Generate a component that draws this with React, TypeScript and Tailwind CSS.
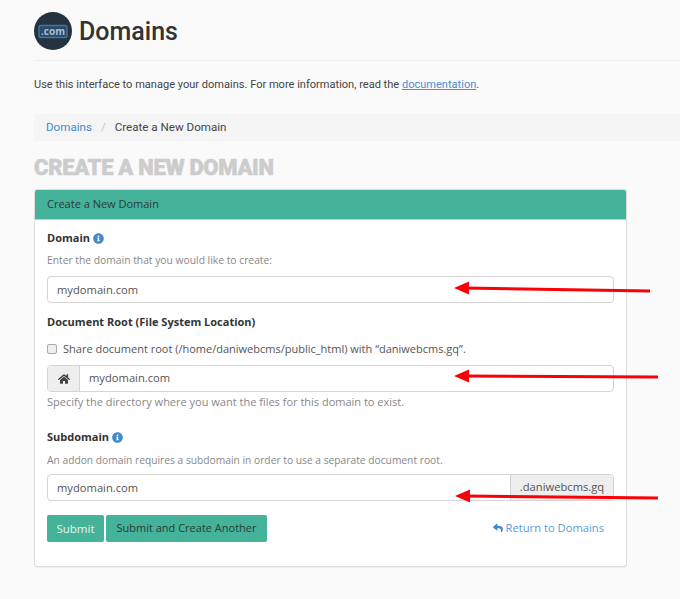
import { FaHome, FaInfoCircle, FaReply } from "react-icons/fa";

function Arrow({ x1, y1, x2, y2 }: { x1: number; y1: number; x2: number; y2: number }) {
  return (
    <g>
      <line x1={x1} y1={y1} x2={x2 + 10} y2={y2} stroke="#fb0007" strokeWidth={3} />
      <polygon points={`${x2},${y2} ${x2 + 15},${y2 - 6.5} ${x2 + 15},${y2 + 6.5}`} fill="#fb0007" />
    </g>
  );
}

export default function App() {
  return (
    <div className="relative h-[599px] w-[680px] overflow-hidden bg-[#fafafa] font-['Open_Sans',sans-serif] text-[#333]">
      <div className="pl-[34px]">
        <div className="flex h-[61px] items-start border-b border-[#eeeeee] pt-3">
          <svg width="38" height="38" viewBox="0 0 38 38">
            <circle cx="19" cy="19" r="19" fill="#24333f" />
            <rect x="5" y="13.5" width="28" height="12" rx="2" fill="#2b4a66" stroke="#3f74a8" strokeWidth="1.4" />
            <text x="19" y="23" textAnchor="middle" fontSize="10" fontWeight="700" fill="#a9bfd2" fontFamily="Open Sans, sans-serif">.com</text>
          </svg>
          <h1 className="ml-[7px] font-['Roboto',sans-serif] text-[25px] leading-[39px] font-medium text-[#333]">Domains</h1>
        </div>
        <p className="mt-[15px] h-[18px] font-['Roboto',sans-serif] text-[11.05px] leading-[18px] text-[#444]">
          Use this interface to manage your domains. For more information, read the{" "}
          <a className="text-[#4a90d0] underline">documentation</a>.
        </p>
        <div className="mt-[20px] flex h-[27px] items-center bg-[#f5f5f5] pt-[1px] pl-3 font-['Roboto',sans-serif] text-[11.6px]">
          <a className="text-[#428bca]">Domains</a>
          <span className="mx-[9px] text-[#ccc]">/</span>
          <span className="text-[#444]">Create a New Domain</span>
        </div>
        <h2 className="mt-[14px] h-[26px] font-['Roboto',sans-serif] text-[22px] leading-[26px] font-black tracking-[-0.3px] text-[#cccccc] [-webkit-text-stroke:0.5px_#cccccc]">CREATE A NEW DOMAIN</h2>

        <div className="mt-[8px] w-[593px] overflow-hidden rounded-[3px] border border-[#dddddd] bg-white shadow-[0_1px_1px_rgba(0,0,0,0.05)]">
          <div className="flex h-[30px] items-center border-b border-[#a5dccb] bg-[#45b29a] px-3 text-[11px] text-[#2b3b38]">Create a New Domain</div>
          <div className="h-[346px] px-3 pt-[10px]">
            <div className="flex h-[16px] items-center gap-[3px] text-[11px] font-bold text-[#333]">
              Domain <FaInfoCircle className="text-[11px] text-[#428bca]" />
            </div>
            <p className="mt-[7px] h-[15px] text-[10.3px] leading-[15px] text-[#888]">Enter the domain that you would like to create:</p>
            <div className="mt-[8px] flex h-[27px] items-center rounded-[4px] border border-[#d4d4d4] bg-white pt-[1px] pl-[9px] text-[11.2px] text-[#555]">mydomain.com</div>

            <div className="mt-[11px] flex h-[16px] items-center text-[11px] font-bold text-[#333]">Document Root (File System Location)</div>
            <label className="mt-[10px] flex h-[18px] items-center text-[11px] text-[#555]">
              <span className="mr-[6px] h-[10px] w-[10px] rounded-[2px] border border-[#aaa] bg-[#eeeeee]" />
              Share document root (/home/daniwebcms/public_html) with “daniwebcms.gq”.
            </label>
            <div className="mt-[7px] flex h-[27px] overflow-hidden rounded-[4px] border border-[#d4d4d4] bg-white text-[11.2px] text-[#555]">
              <span className="flex w-[32px] items-center justify-center border-r border-[#d4d4d4] bg-[#eeeeee] text-[12px] text-[#444]"><FaHome /></span>
              <span className="flex items-center pl-[9px]">mydomain.com</span>
            </div>
            <p className="mt-[2px] h-[16px] text-[11px] leading-[16px] text-[#888]">Specify the directory where you want the files for this domain to exist.</p>

            <div className="mt-[19px] flex h-[16px] items-center gap-[3px] text-[11px] font-bold text-[#333]">
              Subdomain <FaInfoCircle className="text-[11px] text-[#428bca]" />
            </div>
            <p className="mt-[8px] h-[15px] text-[10.25px] leading-[15px] text-[#888]">An addon domain requires a subdomain in order to use a separate document root.</p>
            <div className="mt-[6px] flex h-[27px] overflow-hidden rounded-[4px] border border-[#d4d4d4] bg-white pt-[1px] text-[11.2px] text-[#555]">
              <span className="flex flex-1 items-center pl-[9px]">mydomain.com</span>
              <span className="-mt-[1px] flex w-[103px] items-center justify-center border-l border-[#d4d4d4] bg-[#eeeeee]">.daniwebcms.gq</span>
            </div>
            <div className="mt-[14px] flex items-center">
              <button className="h-[27px] w-[57px] rounded-[2px] bg-[#45b29a] text-[11.5px] text-[#e4f5f0]">Submit</button>
              <button className="ml-[2px] h-[27px] w-[161px] rounded-[2px] bg-[#45b29a] text-[11px] text-[#2b3b38]">Submit and Create Another</button>
              <a className="mr-[10px] mb-[1px] ml-auto flex items-center gap-[3px] text-[11.2px] text-[#5a9bd5]"><FaReply className="text-[10px] text-[#428bca]" />Return to Domains</a>
            </div>
          </div>
        </div>
      </div>
      <svg className="absolute top-0 left-0" width="680" height="599" viewBox="0 0 680 599">
        <Arrow x1={650} y1={291} x2={454} y2={288} />
        <Arrow x1={658} y1={377} x2={454} y2={376} />
        <Arrow x1={658} y1={498} x2={455} y2={496} />
      </svg>
    </div>
  );
}
